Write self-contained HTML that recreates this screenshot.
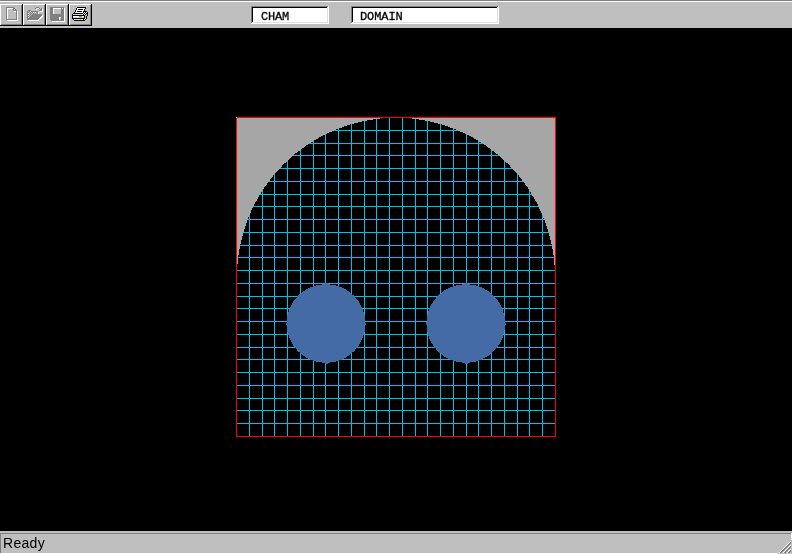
<!DOCTYPE html>
<html lang="en"><head><meta charset="utf-8"><title>CHAM - DOMAIN</title>
<style>
html,body{margin:0;padding:0;background:#000;overflow:hidden}
body{width:792px;height:554px;position:relative}
#tb{position:absolute;left:0;top:0;width:792px;height:28px;background:#bfbfbf;box-shadow:inset 0 1px 0 #808080}
#tb:after{content:"";position:absolute;left:0;top:1px;width:100%;height:1px;background:#fff}
svg{position:absolute;left:0;top:0}
.f{position:absolute;top:11px;height:14px;line-height:14px;font-family:"Liberation Mono",monospace;font-size:12px;color:#000;white-space:pre;letter-spacing:-0.2px;-webkit-text-stroke:0.3px #000;transform:scale(1,0.889) translateZ(0);transform-origin:0 0;will-change:transform}
#st{position:absolute;left:3px;top:535px;letter-spacing:0.3px;height:17px;line-height:17px;font-family:"Liberation Sans",sans-serif;font-size:14px;color:#000;transform:translateZ(0);will-change:transform}
</style></head><body>
<div id="tb"></div>
<svg width="792" height="554" viewBox="0 0 792 554" shape-rendering="crispEdges">
<rect x="249" y="118" width="1" height="318" fill="#00bfef"/>
<rect x="262" y="118" width="1" height="318" fill="#00bfef"/>
<rect x="274" y="118" width="1" height="318" fill="#00bfef"/>
<rect x="287" y="118" width="1" height="318" fill="#00bfef"/>
<rect x="300" y="118" width="1" height="318" fill="#00bfef"/>
<rect x="313" y="118" width="1" height="318" fill="#00bfef"/>
<rect x="325" y="118" width="1" height="318" fill="#00bfef"/>
<rect x="338" y="118" width="1" height="318" fill="#00bfef"/>
<rect x="351" y="118" width="1" height="318" fill="#00bfef"/>
<rect x="364" y="118" width="1" height="318" fill="#00bfef"/>
<rect x="376" y="118" width="1" height="318" fill="#00bfef"/>
<rect x="389" y="118" width="1" height="318" fill="#00bfef"/>
<rect x="402" y="118" width="1" height="318" fill="#00bfef"/>
<rect x="415" y="118" width="1" height="318" fill="#00bfef"/>
<rect x="427" y="118" width="1" height="318" fill="#00bfef"/>
<rect x="440" y="118" width="1" height="318" fill="#00bfef"/>
<rect x="453" y="118" width="1" height="318" fill="#00bfef"/>
<rect x="466" y="118" width="1" height="318" fill="#00bfef"/>
<rect x="478" y="118" width="1" height="318" fill="#00bfef"/>
<rect x="491" y="118" width="1" height="318" fill="#00bfef"/>
<rect x="504" y="118" width="1" height="318" fill="#00bfef"/>
<rect x="517" y="118" width="1" height="318" fill="#00bfef"/>
<rect x="529" y="118" width="1" height="318" fill="#00bfef"/>
<rect x="542" y="118" width="1" height="318" fill="#00bfef"/>
<rect x="237" y="130" width="318" height="1" fill="#00bfef"/>
<rect x="237" y="143" width="318" height="1" fill="#00bfef"/>
<rect x="237" y="155" width="318" height="1" fill="#00bfef"/>
<rect x="237" y="168" width="318" height="1" fill="#00bfef"/>
<rect x="237" y="181" width="318" height="1" fill="#00bfef"/>
<rect x="237" y="194" width="318" height="1" fill="#00bfef"/>
<rect x="237" y="206" width="318" height="1" fill="#00bfef"/>
<rect x="237" y="219" width="318" height="1" fill="#00bfef"/>
<rect x="237" y="232" width="318" height="1" fill="#00bfef"/>
<rect x="237" y="245" width="318" height="1" fill="#00bfef"/>
<rect x="237" y="257" width="318" height="1" fill="#00bfef"/>
<rect x="237" y="270" width="318" height="1" fill="#00bfef"/>
<rect x="237" y="283" width="318" height="1" fill="#00bfef"/>
<rect x="237" y="296" width="318" height="1" fill="#00bfef"/>
<rect x="237" y="308" width="318" height="1" fill="#00bfef"/>
<rect x="237" y="321" width="318" height="1" fill="#00bfef"/>
<rect x="237" y="334" width="318" height="1" fill="#00bfef"/>
<rect x="237" y="347" width="318" height="1" fill="#00bfef"/>
<rect x="237" y="359" width="318" height="1" fill="#00bfef"/>
<rect x="237" y="372" width="318" height="1" fill="#00bfef"/>
<rect x="237" y="385" width="318" height="1" fill="#00bfef"/>
<rect x="237" y="398" width="318" height="1" fill="#00bfef"/>
<rect x="237" y="410" width="318" height="1" fill="#00bfef"/>
<rect x="237" y="423" width="318" height="1" fill="#00bfef"/>
<path d="M237,118 H555 V276.7 A159,159 0 0 0 237,276.7 Z" fill="#a6a6a6"/>
<circle cx="326" cy="323.5" r="39.4" fill="#446ba5"/>
<circle cx="465.8" cy="323.5" r="39.4" fill="#446ba5"/>
<rect x="286" y="323" width="1" height="2" fill="#446ba5"/>
<rect x="365" y="323" width="1" height="2" fill="#446ba5"/>
<rect x="325" y="283" width="3" height="1" fill="#446ba5"/>
<rect x="325" y="363" width="3" height="1" fill="#446ba5"/>
<rect x="426" y="323" width="1" height="2" fill="#446ba5"/>
<rect x="505" y="323" width="1" height="2" fill="#446ba5"/>
<rect x="465" y="283" width="3" height="1" fill="#446ba5"/>
<rect x="465" y="363" width="3" height="1" fill="#446ba5"/>
<rect x="236" y="117" width="320" height="1" fill="#ff0000"/>
<rect x="236" y="436" width="320" height="1" fill="#ff0000"/>
<rect x="236" y="117" width="1" height="320" fill="#ff0000"/>
<rect x="555" y="117" width="1" height="320" fill="#ff0000"/>
<rect x="236" y="117" width="1" height="1" fill="#9cc0c0"/>
<rect x="0" y="4" width="23" height="22" fill="#bfbfbf"/>
<rect x="0" y="4" width="22" height="1" fill="#ffffff"/>
<rect x="0" y="4" width="1" height="21" fill="#ffffff"/>
<rect x="21" y="5" width="1" height="20" fill="#808080"/>
<rect x="1" y="24" width="21" height="1" fill="#808080"/>
<rect x="22" y="4" width="1" height="22" fill="#000000"/>
<rect x="0" y="25" width="23" height="1" fill="#000000"/>
<rect x="23" y="4" width="23" height="22" fill="#bfbfbf"/>
<rect x="23" y="4" width="22" height="1" fill="#ffffff"/>
<rect x="23" y="4" width="1" height="21" fill="#ffffff"/>
<rect x="44" y="5" width="1" height="20" fill="#808080"/>
<rect x="24" y="24" width="21" height="1" fill="#808080"/>
<rect x="45" y="4" width="1" height="22" fill="#000000"/>
<rect x="23" y="25" width="23" height="1" fill="#000000"/>
<rect x="46" y="4" width="23" height="22" fill="#bfbfbf"/>
<rect x="46" y="4" width="22" height="1" fill="#ffffff"/>
<rect x="46" y="4" width="1" height="21" fill="#ffffff"/>
<rect x="67" y="5" width="1" height="20" fill="#808080"/>
<rect x="47" y="24" width="21" height="1" fill="#808080"/>
<rect x="68" y="4" width="1" height="22" fill="#000000"/>
<rect x="46" y="25" width="23" height="1" fill="#000000"/>
<rect x="69" y="4" width="23" height="22" fill="#bfbfbf"/>
<rect x="69" y="4" width="22" height="1" fill="#ffffff"/>
<rect x="69" y="4" width="1" height="21" fill="#ffffff"/>
<rect x="90" y="5" width="1" height="20" fill="#808080"/>
<rect x="70" y="24" width="21" height="1" fill="#808080"/>
<rect x="91" y="4" width="1" height="22" fill="#000000"/>
<rect x="69" y="25" width="23" height="1" fill="#000000"/>
<rect x="7" y="8" width="6" height="1" fill="#ffffff"/>
<rect x="7" y="9" width="1" height="1" fill="#ffffff"/>
<rect x="14" y="9" width="1" height="1" fill="#ffffff"/>
<rect x="7" y="10" width="1" height="1" fill="#ffffff"/>
<rect x="7" y="11" width="1" height="1" fill="#ffffff"/>
<rect x="14" y="11" width="2" height="1" fill="#ffffff"/>
<rect x="17" y="11" width="1" height="1" fill="#ffffff"/>
<rect x="7" y="12" width="1" height="1" fill="#ffffff"/>
<rect x="17" y="12" width="1" height="1" fill="#ffffff"/>
<rect x="7" y="13" width="1" height="1" fill="#ffffff"/>
<rect x="17" y="13" width="1" height="1" fill="#ffffff"/>
<rect x="7" y="14" width="1" height="1" fill="#ffffff"/>
<rect x="17" y="14" width="1" height="1" fill="#ffffff"/>
<rect x="7" y="15" width="1" height="1" fill="#ffffff"/>
<rect x="17" y="15" width="1" height="1" fill="#ffffff"/>
<rect x="7" y="16" width="1" height="1" fill="#ffffff"/>
<rect x="17" y="16" width="1" height="1" fill="#ffffff"/>
<rect x="7" y="17" width="1" height="1" fill="#ffffff"/>
<rect x="17" y="17" width="1" height="1" fill="#ffffff"/>
<rect x="7" y="18" width="1" height="1" fill="#ffffff"/>
<rect x="17" y="18" width="1" height="1" fill="#ffffff"/>
<rect x="17" y="19" width="1" height="1" fill="#ffffff"/>
<rect x="7" y="20" width="11" height="1" fill="#ffffff"/>
<rect x="6" y="7" width="8" height="1" fill="#808080"/>
<rect x="6" y="8" width="1" height="1" fill="#808080"/>
<rect x="13" y="8" width="2" height="1" fill="#808080"/>
<rect x="6" y="9" width="1" height="1" fill="#808080"/>
<rect x="13" y="9" width="1" height="1" fill="#808080"/>
<rect x="15" y="9" width="1" height="1" fill="#808080"/>
<rect x="6" y="10" width="1" height="1" fill="#808080"/>
<rect x="13" y="10" width="4" height="1" fill="#808080"/>
<rect x="6" y="11" width="1" height="1" fill="#808080"/>
<rect x="16" y="11" width="1" height="1" fill="#808080"/>
<rect x="6" y="12" width="1" height="1" fill="#808080"/>
<rect x="16" y="12" width="1" height="1" fill="#808080"/>
<rect x="6" y="13" width="1" height="1" fill="#808080"/>
<rect x="16" y="13" width="1" height="1" fill="#808080"/>
<rect x="6" y="14" width="1" height="1" fill="#808080"/>
<rect x="16" y="14" width="1" height="1" fill="#808080"/>
<rect x="6" y="15" width="1" height="1" fill="#808080"/>
<rect x="16" y="15" width="1" height="1" fill="#808080"/>
<rect x="6" y="16" width="1" height="1" fill="#808080"/>
<rect x="16" y="16" width="1" height="1" fill="#808080"/>
<rect x="6" y="17" width="1" height="1" fill="#808080"/>
<rect x="16" y="17" width="1" height="1" fill="#808080"/>
<rect x="6" y="18" width="1" height="1" fill="#808080"/>
<rect x="16" y="18" width="1" height="1" fill="#808080"/>
<rect x="6" y="19" width="11" height="1" fill="#808080"/>
<rect x="37" y="8" width="2" height="1" fill="#ffffff"/>
<rect x="36" y="9" width="1" height="1" fill="#ffffff"/>
<rect x="42" y="9" width="1" height="1" fill="#ffffff"/>
<rect x="42" y="10" width="1" height="1" fill="#ffffff"/>
<rect x="30" y="11" width="1" height="1" fill="#ffffff"/>
<rect x="40" y="11" width="3" height="1" fill="#ffffff"/>
<rect x="33" y="12" width="1" height="1" fill="#ffffff"/>
<rect x="35" y="12" width="1" height="1" fill="#ffffff"/>
<rect x="38" y="12" width="1" height="1" fill="#ffffff"/>
<rect x="28" y="13" width="1" height="1" fill="#ffffff"/>
<rect x="38" y="13" width="1" height="1" fill="#ffffff"/>
<rect x="28" y="15" width="1" height="1" fill="#ffffff"/>
<rect x="42" y="15" width="1" height="1" fill="#ffffff"/>
<rect x="41" y="16" width="2" height="1" fill="#ffffff"/>
<rect x="28" y="17" width="1" height="1" fill="#ffffff"/>
<rect x="40" y="17" width="2" height="1" fill="#ffffff"/>
<rect x="39" y="18" width="2" height="1" fill="#ffffff"/>
<rect x="38" y="19" width="2" height="1" fill="#ffffff"/>
<rect x="28" y="20" width="11" height="1" fill="#ffffff"/>
<rect x="36" y="7" width="3" height="1" fill="#808080"/>
<rect x="35" y="8" width="1" height="1" fill="#808080"/>
<rect x="39" y="8" width="1" height="1" fill="#808080"/>
<rect x="41" y="8" width="1" height="1" fill="#808080"/>
<rect x="40" y="9" width="2" height="1" fill="#808080"/>
<rect x="28" y="10" width="3" height="1" fill="#808080"/>
<rect x="39" y="10" width="3" height="1" fill="#808080"/>
<rect x="27" y="11" width="1" height="1" fill="#808080"/>
<rect x="29" y="11" width="1" height="1" fill="#808080"/>
<rect x="31" y="11" width="7" height="1" fill="#808080"/>
<rect x="27" y="12" width="2" height="1" fill="#808080"/>
<rect x="30" y="12" width="1" height="1" fill="#808080"/>
<rect x="32" y="12" width="1" height="1" fill="#808080"/>
<rect x="34" y="12" width="1" height="1" fill="#808080"/>
<rect x="36" y="12" width="2" height="1" fill="#808080"/>
<rect x="27" y="13" width="1" height="1" fill="#808080"/>
<rect x="29" y="13" width="1" height="1" fill="#808080"/>
<rect x="31" y="13" width="1" height="1" fill="#808080"/>
<rect x="33" y="13" width="1" height="1" fill="#808080"/>
<rect x="35" y="13" width="1" height="1" fill="#808080"/>
<rect x="37" y="13" width="1" height="1" fill="#808080"/>
<rect x="27" y="14" width="2" height="1" fill="#808080"/>
<rect x="30" y="14" width="1" height="1" fill="#808080"/>
<rect x="32" y="14" width="10" height="1" fill="#808080"/>
<rect x="27" y="15" width="1" height="1" fill="#808080"/>
<rect x="29" y="15" width="1" height="1" fill="#808080"/>
<rect x="31" y="15" width="11" height="1" fill="#808080"/>
<rect x="27" y="16" width="2" height="1" fill="#808080"/>
<rect x="30" y="16" width="11" height="1" fill="#808080"/>
<rect x="27" y="17" width="1" height="1" fill="#808080"/>
<rect x="29" y="17" width="11" height="1" fill="#808080"/>
<rect x="27" y="18" width="12" height="1" fill="#808080"/>
<rect x="27" y="19" width="11" height="1" fill="#808080"/>
<rect x="53" y="8" width="8" height="1" fill="#ffffff"/>
<rect x="62" y="8" width="1" height="1" fill="#ffffff"/>
<rect x="64" y="8" width="1" height="1" fill="#ffffff"/>
<rect x="53" y="9" width="1" height="1" fill="#ffffff"/>
<rect x="64" y="9" width="1" height="1" fill="#ffffff"/>
<rect x="53" y="10" width="1" height="1" fill="#ffffff"/>
<rect x="64" y="10" width="1" height="1" fill="#ffffff"/>
<rect x="53" y="11" width="1" height="1" fill="#ffffff"/>
<rect x="64" y="11" width="1" height="1" fill="#ffffff"/>
<rect x="53" y="12" width="1" height="1" fill="#ffffff"/>
<rect x="64" y="12" width="1" height="1" fill="#ffffff"/>
<rect x="53" y="13" width="1" height="1" fill="#ffffff"/>
<rect x="64" y="13" width="1" height="1" fill="#ffffff"/>
<rect x="64" y="14" width="1" height="1" fill="#ffffff"/>
<rect x="64" y="15" width="1" height="1" fill="#ffffff"/>
<rect x="64" y="16" width="1" height="1" fill="#ffffff"/>
<rect x="59" y="17" width="2" height="1" fill="#ffffff"/>
<rect x="64" y="17" width="1" height="1" fill="#ffffff"/>
<rect x="59" y="18" width="1" height="1" fill="#ffffff"/>
<rect x="64" y="18" width="1" height="1" fill="#ffffff"/>
<rect x="59" y="19" width="1" height="1" fill="#ffffff"/>
<rect x="64" y="19" width="1" height="1" fill="#ffffff"/>
<rect x="64" y="20" width="1" height="1" fill="#ffffff"/>
<rect x="52" y="21" width="13" height="1" fill="#ffffff"/>
<rect x="50" y="7" width="14" height="1" fill="#808080"/>
<rect x="50" y="8" width="3" height="1" fill="#808080"/>
<rect x="61" y="8" width="1" height="1" fill="#808080"/>
<rect x="63" y="8" width="1" height="1" fill="#808080"/>
<rect x="50" y="9" width="3" height="1" fill="#808080"/>
<rect x="61" y="9" width="3" height="1" fill="#808080"/>
<rect x="50" y="10" width="3" height="1" fill="#808080"/>
<rect x="61" y="10" width="3" height="1" fill="#808080"/>
<rect x="50" y="11" width="3" height="1" fill="#808080"/>
<rect x="61" y="11" width="3" height="1" fill="#808080"/>
<rect x="50" y="12" width="3" height="1" fill="#808080"/>
<rect x="61" y="12" width="3" height="1" fill="#808080"/>
<rect x="50" y="13" width="3" height="1" fill="#808080"/>
<rect x="61" y="13" width="3" height="1" fill="#808080"/>
<rect x="50" y="14" width="14" height="1" fill="#808080"/>
<rect x="50" y="15" width="14" height="1" fill="#808080"/>
<rect x="50" y="16" width="14" height="1" fill="#808080"/>
<rect x="50" y="17" width="9" height="1" fill="#808080"/>
<rect x="61" y="17" width="3" height="1" fill="#808080"/>
<rect x="50" y="18" width="9" height="1" fill="#808080"/>
<rect x="61" y="18" width="3" height="1" fill="#808080"/>
<rect x="50" y="19" width="9" height="1" fill="#808080"/>
<rect x="61" y="19" width="3" height="1" fill="#808080"/>
<rect x="51" y="20" width="13" height="1" fill="#808080"/>
<rect x="77" y="7" width="9" height="1" fill="#000000"/>
<rect x="76" y="8" width="1" height="1" fill="#000000"/>
<rect x="77" y="8" width="8" height="1" fill="#ffffff"/>
<rect x="85" y="8" width="1" height="1" fill="#000000"/>
<rect x="76" y="9" width="1" height="1" fill="#000000"/>
<rect x="77" y="9" width="1" height="1" fill="#ffffff"/>
<rect x="78" y="9" width="5" height="1" fill="#000000"/>
<rect x="83" y="9" width="1" height="1" fill="#ffffff"/>
<rect x="84" y="9" width="1" height="1" fill="#000000"/>
<rect x="75" y="10" width="1" height="1" fill="#000000"/>
<rect x="76" y="10" width="8" height="1" fill="#ffffff"/>
<rect x="84" y="10" width="1" height="1" fill="#000000"/>
<rect x="75" y="11" width="1" height="1" fill="#000000"/>
<rect x="76" y="11" width="1" height="1" fill="#ffffff"/>
<rect x="77" y="11" width="5" height="1" fill="#000000"/>
<rect x="82" y="11" width="1" height="1" fill="#ffffff"/>
<rect x="83" y="11" width="4" height="1" fill="#000000"/>
<rect x="74" y="12" width="1" height="1" fill="#000000"/>
<rect x="75" y="12" width="8" height="1" fill="#ffffff"/>
<rect x="83" y="12" width="1" height="1" fill="#000000"/>
<rect x="84" y="12" width="1" height="1" fill="#ffffff"/>
<rect x="85" y="12" width="1" height="1" fill="#000000"/>
<rect x="86" y="12" width="1" height="1" fill="#ffffff"/>
<rect x="87" y="12" width="1" height="1" fill="#000000"/>
<rect x="73" y="13" width="10" height="1" fill="#000000"/>
<rect x="83" y="13" width="1" height="1" fill="#ffffff"/>
<rect x="84" y="13" width="1" height="1" fill="#000000"/>
<rect x="85" y="13" width="1" height="1" fill="#ffffff"/>
<rect x="86" y="13" width="2" height="1" fill="#000000"/>
<rect x="72" y="14" width="1" height="1" fill="#000000"/>
<rect x="73" y="14" width="1" height="1" fill="#ffffff"/>
<rect x="74" y="14" width="8" height="1" fill="#d4d4d4"/>
<rect x="82" y="14" width="1" height="1" fill="#ffffff"/>
<rect x="83" y="14" width="1" height="1" fill="#000000"/>
<rect x="84" y="14" width="1" height="1" fill="#ffffff"/>
<rect x="85" y="14" width="1" height="1" fill="#000000"/>
<rect x="86" y="14" width="1" height="1" fill="#c0c0c0"/>
<rect x="87" y="14" width="1" height="1" fill="#000000"/>
<rect x="72" y="15" width="13" height="1" fill="#000000"/>
<rect x="85" y="15" width="2" height="1" fill="#c0c0c0"/>
<rect x="87" y="15" width="1" height="1" fill="#000000"/>
<rect x="72" y="16" width="1" height="1" fill="#000000"/>
<rect x="73" y="16" width="6" height="1" fill="#ffffff"/>
<rect x="79" y="16" width="3" height="1" fill="#9090a0"/>
<rect x="82" y="16" width="2" height="1" fill="#ffffff"/>
<rect x="84" y="16" width="1" height="1" fill="#000000"/>
<rect x="85" y="16" width="1" height="1" fill="#c0c0c0"/>
<rect x="86" y="16" width="1" height="1" fill="#000000"/>
<rect x="72" y="17" width="1" height="1" fill="#000000"/>
<rect x="73" y="17" width="6" height="1" fill="#d8d8ec"/>
<rect x="79" y="17" width="3" height="1" fill="#e0c800"/>
<rect x="82" y="17" width="2" height="1" fill="#d8d8ec"/>
<rect x="84" y="17" width="1" height="1" fill="#000000"/>
<rect x="85" y="17" width="1" height="1" fill="#c0c0c0"/>
<rect x="86" y="17" width="1" height="1" fill="#000000"/>
<rect x="72" y="18" width="13" height="1" fill="#000000"/>
<rect x="85" y="18" width="1" height="1" fill="#ffffff"/>
<rect x="86" y="18" width="1" height="1" fill="#000000"/>
<rect x="73" y="19" width="1" height="1" fill="#000000"/>
<rect x="74" y="19" width="1" height="1" fill="#ffffff"/>
<rect x="75" y="19" width="7" height="1" fill="#d4d4d4"/>
<rect x="82" y="19" width="1" height="1" fill="#ffffff"/>
<rect x="83" y="19" width="1" height="1" fill="#000000"/>
<rect x="84" y="19" width="1" height="1" fill="#ffffff"/>
<rect x="85" y="19" width="1" height="1" fill="#000000"/>
<rect x="74" y="20" width="11" height="1" fill="#000000"/>
<rect x="251" y="6" width="78" height="18" fill="#ffffff"/>
<rect x="251" y="6" width="77" height="1" fill="#808080"/>
<rect x="251" y="6" width="1" height="17" fill="#808080"/>
<rect x="252" y="7" width="75" height="1" fill="#000000"/>
<rect x="252" y="7" width="1" height="15" fill="#000000"/>
<rect x="252" y="22" width="76" height="1" fill="#dfdfdf"/>
<rect x="327" y="7" width="1" height="16" fill="#dfdfdf"/>
<rect x="351" y="6" width="148" height="18" fill="#ffffff"/>
<rect x="351" y="6" width="147" height="1" fill="#808080"/>
<rect x="351" y="6" width="1" height="17" fill="#808080"/>
<rect x="352" y="7" width="145" height="1" fill="#000000"/>
<rect x="352" y="7" width="1" height="15" fill="#000000"/>
<rect x="352" y="22" width="146" height="1" fill="#dfdfdf"/>
<rect x="497" y="7" width="1" height="16" fill="#dfdfdf"/>
<rect x="0" y="531" width="792" height="23" fill="#bfbfbf"/>
<rect x="0" y="533" width="791" height="1" fill="#808080"/>
<rect x="0" y="533" width="1" height="20" fill="#808080"/>
<rect x="0" y="553" width="778" height="1" fill="#ffffff"/>
<rect x="791" y="533" width="1" height="7" fill="#ffffff"/>
<rect x="779" y="552" width="1" height="1" fill="#ffffff"/>
<rect x="780" y="551" width="1" height="1" fill="#ffffff"/>
<rect x="781" y="550" width="1" height="1" fill="#ffffff"/>
<rect x="782" y="549" width="1" height="1" fill="#ffffff"/>
<rect x="783" y="548" width="1" height="1" fill="#ffffff"/>
<rect x="784" y="547" width="1" height="1" fill="#ffffff"/>
<rect x="785" y="546" width="1" height="1" fill="#ffffff"/>
<rect x="786" y="545" width="1" height="1" fill="#ffffff"/>
<rect x="787" y="544" width="1" height="1" fill="#ffffff"/>
<rect x="788" y="543" width="1" height="1" fill="#ffffff"/>
<rect x="789" y="542" width="1" height="1" fill="#ffffff"/>
<rect x="790" y="541" width="1" height="1" fill="#ffffff"/>
<rect x="780" y="552" width="1" height="1" fill="#808080"/>
<rect x="781" y="551" width="1" height="1" fill="#808080"/>
<rect x="782" y="550" width="1" height="1" fill="#808080"/>
<rect x="783" y="549" width="1" height="1" fill="#808080"/>
<rect x="784" y="548" width="1" height="1" fill="#808080"/>
<rect x="785" y="547" width="1" height="1" fill="#808080"/>
<rect x="786" y="546" width="1" height="1" fill="#808080"/>
<rect x="787" y="545" width="1" height="1" fill="#808080"/>
<rect x="788" y="544" width="1" height="1" fill="#808080"/>
<rect x="789" y="543" width="1" height="1" fill="#808080"/>
<rect x="790" y="542" width="1" height="1" fill="#808080"/>
<rect x="781" y="552" width="1" height="1" fill="#808080"/>
<rect x="782" y="551" width="1" height="1" fill="#808080"/>
<rect x="783" y="550" width="1" height="1" fill="#808080"/>
<rect x="784" y="549" width="1" height="1" fill="#808080"/>
<rect x="785" y="548" width="1" height="1" fill="#808080"/>
<rect x="786" y="547" width="1" height="1" fill="#808080"/>
<rect x="787" y="546" width="1" height="1" fill="#808080"/>
<rect x="788" y="545" width="1" height="1" fill="#808080"/>
<rect x="789" y="544" width="1" height="1" fill="#808080"/>
<rect x="790" y="543" width="1" height="1" fill="#808080"/>
<rect x="783" y="552" width="1" height="1" fill="#ffffff"/>
<rect x="784" y="551" width="1" height="1" fill="#ffffff"/>
<rect x="785" y="550" width="1" height="1" fill="#ffffff"/>
<rect x="786" y="549" width="1" height="1" fill="#ffffff"/>
<rect x="787" y="548" width="1" height="1" fill="#ffffff"/>
<rect x="788" y="547" width="1" height="1" fill="#ffffff"/>
<rect x="789" y="546" width="1" height="1" fill="#ffffff"/>
<rect x="790" y="545" width="1" height="1" fill="#ffffff"/>
<rect x="784" y="552" width="1" height="1" fill="#808080"/>
<rect x="785" y="551" width="1" height="1" fill="#808080"/>
<rect x="786" y="550" width="1" height="1" fill="#808080"/>
<rect x="787" y="549" width="1" height="1" fill="#808080"/>
<rect x="788" y="548" width="1" height="1" fill="#808080"/>
<rect x="789" y="547" width="1" height="1" fill="#808080"/>
<rect x="790" y="546" width="1" height="1" fill="#808080"/>
<rect x="785" y="552" width="1" height="1" fill="#808080"/>
<rect x="786" y="551" width="1" height="1" fill="#808080"/>
<rect x="787" y="550" width="1" height="1" fill="#808080"/>
<rect x="788" y="549" width="1" height="1" fill="#808080"/>
<rect x="789" y="548" width="1" height="1" fill="#808080"/>
<rect x="790" y="547" width="1" height="1" fill="#808080"/>
<rect x="787" y="552" width="1" height="1" fill="#ffffff"/>
<rect x="788" y="551" width="1" height="1" fill="#ffffff"/>
<rect x="789" y="550" width="1" height="1" fill="#ffffff"/>
<rect x="790" y="549" width="1" height="1" fill="#ffffff"/>
<rect x="788" y="552" width="1" height="1" fill="#808080"/>
<rect x="789" y="551" width="1" height="1" fill="#808080"/>
<rect x="790" y="550" width="1" height="1" fill="#808080"/>
<rect x="789" y="552" width="1" height="1" fill="#808080"/>
<rect x="790" y="551" width="1" height="1" fill="#808080"/>
</svg>
<div class="f" style="left:261px">CHAM</div>
<div class="f" style="left:360px;letter-spacing:-0.1px">DOMAIN</div>
<div id="st">Ready</div>
</body></html>
